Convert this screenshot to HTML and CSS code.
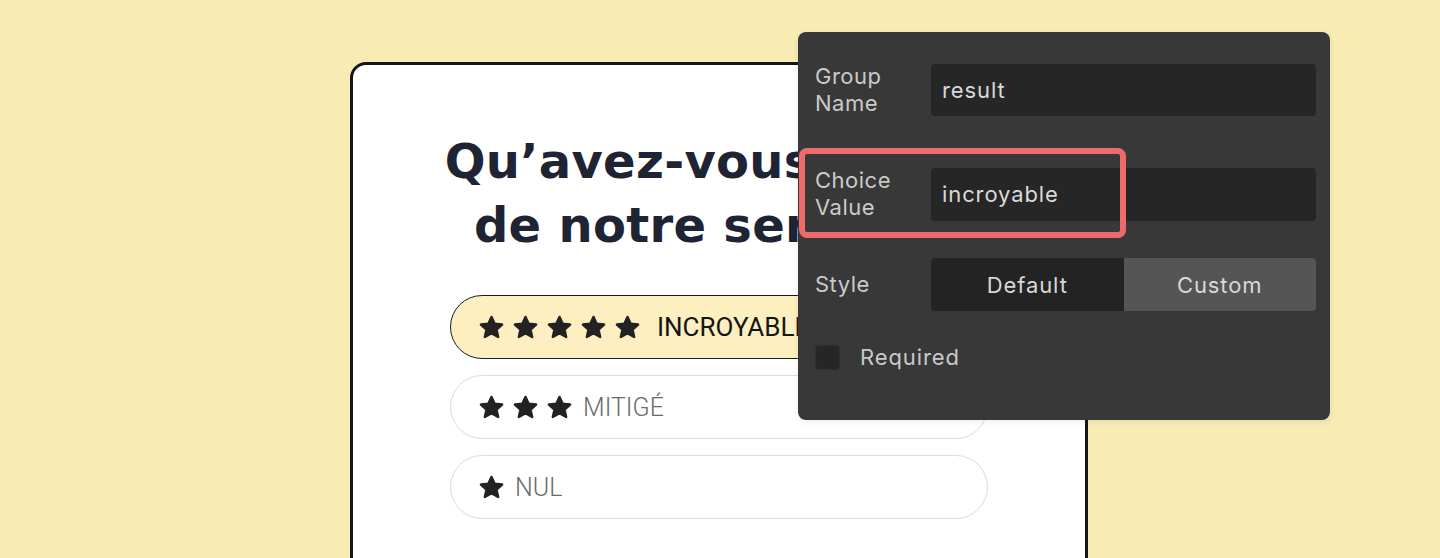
FILE: index.html
```html
<!DOCTYPE html>
<html lang="fr">
<head>
<meta charset="utf-8">
<title>Sondage</title>
<link rel="stylesheet" href="styles.css">
</head>
<body>
<div class="stage">
  <div class="card">
    <h1 class="title">Qu’avez-vous pensé<br>de notre service ?</h1>
    <div class="options">
      <div class="option selected">
        <span class="stars">
          <svg class="star" viewBox="0 0 24 24"><polygon points="12,2.6 14.8,8.7 21.4,9.4 16.5,13.9 17.9,20.4 12,17.1 6.1,20.4 7.5,13.9 2.6,9.4 9.2,8.7"/></svg>
          <svg class="star" viewBox="0 0 24 24"><polygon points="12,2.6 14.8,8.7 21.4,9.4 16.5,13.9 17.9,20.4 12,17.1 6.1,20.4 7.5,13.9 2.6,9.4 9.2,8.7"/></svg>
          <svg class="star" viewBox="0 0 24 24"><polygon points="12,2.6 14.8,8.7 21.4,9.4 16.5,13.9 17.9,20.4 12,17.1 6.1,20.4 7.5,13.9 2.6,9.4 9.2,8.7"/></svg>
          <svg class="star" viewBox="0 0 24 24"><polygon points="12,2.6 14.8,8.7 21.4,9.4 16.5,13.9 17.9,20.4 12,17.1 6.1,20.4 7.5,13.9 2.6,9.4 9.2,8.7"/></svg>
          <svg class="star" viewBox="0 0 24 24"><polygon points="12,2.6 14.8,8.7 21.4,9.4 16.5,13.9 17.9,20.4 12,17.1 6.1,20.4 7.5,13.9 2.6,9.4 9.2,8.7"/></svg>
        </span>
        <span class="label">INCROYABLE</span>
      </div>
      <div class="option">
        <span class="stars">
          <svg class="star" viewBox="0 0 24 24"><polygon points="12,2.6 14.8,8.7 21.4,9.4 16.5,13.9 17.9,20.4 12,17.1 6.1,20.4 7.5,13.9 2.6,9.4 9.2,8.7"/></svg>
          <svg class="star" viewBox="0 0 24 24"><polygon points="12,2.6 14.8,8.7 21.4,9.4 16.5,13.9 17.9,20.4 12,17.1 6.1,20.4 7.5,13.9 2.6,9.4 9.2,8.7"/></svg>
          <svg class="star" viewBox="0 0 24 24"><polygon points="12,2.6 14.8,8.7 21.4,9.4 16.5,13.9 17.9,20.4 12,17.1 6.1,20.4 7.5,13.9 2.6,9.4 9.2,8.7"/></svg>
        </span>
        <span class="label">MITIGÉ</span>
      </div>
      <div class="option">
        <span class="stars">
          <svg class="star" viewBox="0 0 24 24"><polygon points="12,2.6 14.8,8.7 21.4,9.4 16.5,13.9 17.9,20.4 12,17.1 6.1,20.4 7.5,13.9 2.6,9.4 9.2,8.7"/></svg>
        </span>
        <span class="label">NUL</span>
      </div>
    </div>
  </div>

  <div class="panel">
    <div class="row row-group">
      <div class="plabel">Group<br>Name</div>
      <div class="field">result</div>
    </div>
    <div class="row row-choice">
      <div class="plabel">Choice<br>Value</div>
      <div class="field">incroyable</div>
    </div>
    <div class="row row-style">
      <div class="plabel">Style</div>
      <div class="segmented">
        <div class="seg seg-on">Default</div>
        <div class="seg seg-off">Custom</div>
      </div>
    </div>
    <div class="required">
      <span class="checkbox"></span>
      <span class="req-text">Required</span>
    </div>
    <div class="highlight"></div>
  </div>
</div>
</body>
</html>
```

FILE: styles.css
```css
html, body {
  margin: 0;
  padding: 0;
}

body {
  background: #f8ecb4;
  width: 1440px;
  height: 558px;
  overflow: hidden;
}

.stage {
  position: relative;
  width: 1440px;
  height: 558px;
  padding-top: 62px;
  box-sizing: border-box;
  overflow: hidden;
}

.card {
  margin-left: 350px;
  width: 732px;
  height: 600px;
  background: #ffffff;
  border: 3px solid #161616;
  border-radius: 16px;
  padding-top: 64px;
  box-sizing: content-box;
}

.title {
  margin: 0;
  font-family: "DejaVu Sans", "Inter", sans-serif;
  font-weight: 700;
  font-size: 48px;
  line-height: 64px;
  letter-spacing: 0.3px;
  color: #1e2434;
  text-align: center;
}

.options {
  margin: 38px auto 0;
  width: 538px;
  display: flex;
  flex-direction: column;
  gap: 16px;
}

.option {
  height: 64px;
  box-sizing: border-box;
  border: 1.5px solid #dcdcdc;
  border-radius: 32px;
  display: flex;
  align-items: center;
  padding-left: 27px;
  gap: 10px;
  background: #ffffff;
}

.option.selected {
  background: #fdefbf;
  border-color: #1c1c1c;
  gap: 16px;
}

.stars {
  display: flex;
  gap: 7px;
}

.star {
  width: 27px;
  height: 27px;
  display: block;
}

.star polygon {
  fill: #222222;
  stroke: #222222;
  stroke-width: 2.2;
  stroke-linejoin: round;
}

.label {
  font-family: "Roboto", "Liberation Sans", sans-serif;
  font-size: 25px;
  font-weight: 300;
  color: #6a6a6a;
  letter-spacing: 0;
}

.selected .label {
  font-size: 26px;
  font-weight: 400;
  color: #151515;
}

/* Settings panel overlay */
.panel {
  position: absolute;
  left: 798px;
  top: 32px;
  width: 532px;
  height: 388px;
  box-sizing: border-box;
  background: #383838;
  border-radius: 8px;
  padding: 31px 14px 0 17px;
  font-family: "Inter", "Liberation Sans", sans-serif;
  color: #cbcbcb;
  box-shadow: 0 2px 6px rgba(0, 0, 0, 0.08);
}

.row {
  display: grid;
  grid-template-columns: 116px 1fr;
  align-items: center;
}

.row-choice {
  margin-top: 50px;
}

.row-style {
  margin-top: 37px;
}

.plabel {
  font-size: 22px;
  line-height: 27px;
  letter-spacing: 0.5px;
  color: #cacaca;
}

.field {
  height: 53px;
  background: #262626;
  border-radius: 4px;
  display: flex;
  align-items: center;
  padding-left: 11px;
  font-size: 22px;
  letter-spacing: 0.9px;
  color: #d9d9d9;
}

.row-group .field {
  height: 52px;
}

.segmented {
  display: flex;
  height: 53px;
  border-radius: 4px;
  overflow: hidden;
}

.seg {
  flex: 1;
  display: flex;
  align-items: center;
  justify-content: center;
  font-size: 22px;
  letter-spacing: 0.9px;
  color: #d8d8d8;
}

.seg-on {
  background: #232323;
}

.seg-off {
  background: #555555;
}

.required {
  margin-top: 33px;
  display: flex;
  align-items: center;
  gap: 20px;
}

.checkbox {
  width: 25px;
  height: 25px;
  background: #262626;
  border-radius: 4px;
  box-sizing: border-box;
  border: 1px solid #2f2f2f;
}

.req-text {
  font-size: 22px;
  letter-spacing: 0.9px;
  color: #c9c9c9;
}

.highlight {
  position: absolute;
  left: 1px;
  top: 116px;
  width: 327px;
  height: 90px;
  box-sizing: border-box;
  border: 6px solid #ef6b6b;
  border-radius: 8px;
}
```
